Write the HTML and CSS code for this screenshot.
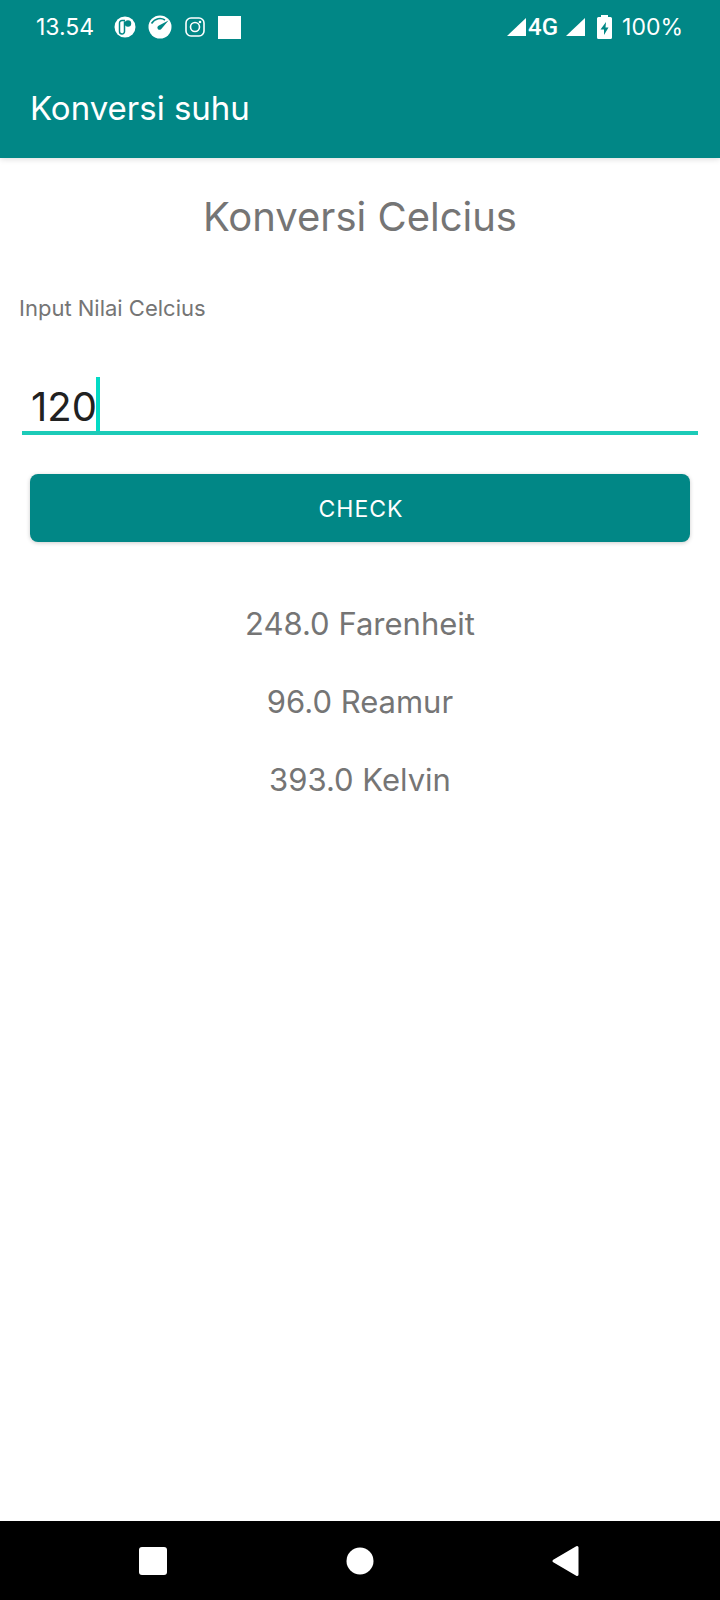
FILE: index.html
```html
<!DOCTYPE html>
<html lang="id">
<head>
<meta charset="utf-8">
<meta name="viewport" content="width=device-width, initial-scale=1">
<title>Konversi suhu</title>
<link rel="stylesheet" href="styles.css">
</head>
<body>
<header class="top">
  <div class="status">
    <time class="clock">13.54</time>
    <div class="notifications">
      <svg width="22" height="22" viewBox="0 0 22 22" aria-hidden="true"><circle cx="11" cy="11" r="10.500" fill="#fff"/><path d="M10.500 5.500V15.500a2.500 2.500 0 0 1-5 0V7a2.500 2.500 0 0 1 2.500-2.500h3" fill="none" stroke="#018786" stroke-width="1.500"/><circle cx="14" cy="7.500" r="3.200" fill="#018786"/></svg>
      <svg width="24" height="24" viewBox="0 0 24 24" aria-hidden="true"><circle cx="12" cy="12" r="11.500" fill="#fff"/><path d="M3.500 8.500C7 3 13 2.500 17 5" fill="none" stroke="#018786" stroke-width="1.500"/><path d="M20.500 5.500l-7 8.200a2.200 2.200 0 1 1-3-3z" fill="#018786"/></svg>
      <svg width="22" height="22" viewBox="0 0 22 22" fill="none" stroke="#fff" stroke-width="1.600" aria-hidden="true"><rect x="2" y="2" width="18" height="18" rx="5"/><circle cx="11" cy="11" r="4.500"/><circle cx="16" cy="6" r="1.300" fill="#fff" stroke="none"/></svg>
      <svg width="23" height="23" viewBox="0 0 23 23" aria-hidden="true"><path d="M0 0h23v23H0z" fill="#fff"/></svg>
    </div>
    <div class="system">
      <svg width="19" height="18" viewBox="0 0 19 18" aria-hidden="true"><path d="M19 0v18H0z" fill="#fff"/></svg>
      <span class="network">4G</span>
      <svg class="signal" width="19" height="18" viewBox="0 0 19 18" aria-hidden="true"><path d="M19 0v18H0z" fill="#fff"/></svg>
      <svg class="battery" width="15" height="24" viewBox="0 0 15 24" aria-hidden="true"><path d="M4 0h7v2h2.500Q15 2 15 3.500v19q0 1.500-1.500 1.500h-12Q0 24 0 22.500v-19Q0 2 1.500 2H4z" fill="#fff"/><path d="M9 7l-5.500 7.500H7V20l4.500-7.500H8.500z" fill="#018786"/></svg>
      <span class="level">100%</span>
    </div>
  </div>
  <h1 class="app-title">Konversi suhu</h1>
</header>
<main class="content">
  <h2 class="heading">Konversi Celcius</h2>
  <label class="label" for="celcius">Input Nilai Celcius</label>
  <div class="field">
    <input class="input" id="celcius" type="text" inputmode="decimal" value="120">
    <span class="caret"></span>
  </div>
  <button class="check" type="button">CHECK</button>
  <div class="results">
    <output for="celcius">248.0 Farenheit</output>
    <output for="celcius">96.0 Reamur</output>
    <output for="celcius">393.0 Kelvin</output>
  </div>
</main>
<nav class="nav">
  <button class="nav-button" type="button" aria-label="Recents"><svg width="32" height="32" viewBox="0 0 32 32"><rect x="2" y="2" width="28" height="28" rx="3" fill="#fff"/></svg></button>
  <button class="nav-button" type="button" aria-label="Home"><svg width="32" height="32" viewBox="0 0 32 32"><circle cx="16" cy="16" r="13.500" fill="#fff"/></svg></button>
  <button class="nav-button" type="button" aria-label="Back"><svg width="32" height="32" viewBox="0 0 32 32"><path d="M3 16L26 2.500v27z" fill="#fff" stroke="#fff" stroke-width="3" stroke-linejoin="round"/></svg></button>
</nav>
</body>
</html>
```
FILE: styles.css
```css
* { box-sizing: border-box; }

body {
  margin: 0;
  min-height: 100vh;
  display: flex;
  flex-direction: column;
  background: #fff;
  color: #757575;
  font-family: Inter, Roboto, sans-serif;
}

svg { display: block; flex: none; }
h1, h2 { margin: 0; }

.top {
  background: #018786;
  color: #fff;
  box-shadow: 0 1px 6px rgba(0, 0, 0, 0.15);
}

.status {
  display: flex;
  align-items: center;
  height: 54px;
  padding: 0 37px 0 36px;
  font-size: 24px;
}

.clock, .level { font-size: 23px; }

.notifications {
  display: flex;
  align-items: center;
  gap: 12px;
  margin-left: 20px;
}

.system {
  display: flex;
  align-items: center;
  margin-left: auto;
}

.network {
  margin-left: 2px;
  font-family: Roboto, sans-serif;
  font-weight: 500;
}

.signal { margin-left: 8px; }
.battery { margin: 0 10px 0 12px; }

.app-title {
  padding: 34px 30px 30px;
  font-size: 33px;
  line-height: 40px;
  font-weight: 400;
}

.content {
  flex: 1;
  display: flex;
  flex-direction: column;
}

.heading {
  margin-top: 34px;
  font-size: 40px;
  line-height: 50px;
  font-weight: 400;
  text-align: center;
}

.label {
  margin: 50px 19px 0;
  font-size: 22px;
  line-height: 32px;
}

.field {
  position: relative;
  margin: 53px 22px 0;
  border-bottom: 4px solid #1ccbb8;
}

.input {
  display: block;
  width: 100%;
  height: 54px;
  padding: 4px 9px 0;
  border: 0;
  outline: 0;
  background: transparent;
  color: #212121;
  font: 400 40px/50px Inter, Roboto, sans-serif;
}

.caret {
  position: absolute;
  left: 74px;
  top: 0;
  bottom: 0;
  width: 4px;
  background: #03dac5;
}

.check {
  margin: 39px 30px 0;
  height: 68px;
  padding: 2px 0 0 2px;
  border: 0;
  border-radius: 8px;
  background: #018786;
  box-shadow: 0 1px 4px rgba(0, 0, 0, 0.2);
  color: #fff;
  font: 400 23px/32px Inter, Roboto, sans-serif;
  letter-spacing: 1px;
}

.results {
  display: flex;
  flex-direction: column;
  gap: 38px;
  margin-top: 62px;
  font-size: 31px;
  line-height: 40px;
  text-align: center;
}

.nav {
  display: flex;
  justify-content: space-around;
  align-items: center;
  height: 79px;
  padding: 0 50px;
  background: #000;
}

.nav-button {
  padding: 0;
  border: 0;
  background: none;
}
```
